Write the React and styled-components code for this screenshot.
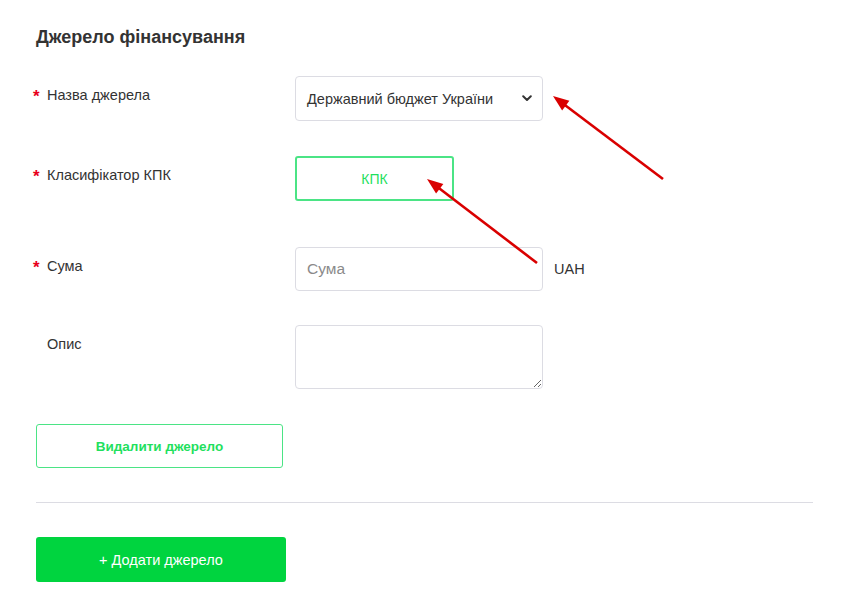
import React from "react";
import styled, { createGlobalStyle } from "styled-components";

const Global = createGlobalStyle`
  html, body { margin: 0; padding: 0; background: #fff; }
  body { font-family: "Liberation Sans", Arial, sans-serif; color: #333; }
  * { box-sizing: border-box; }
`;

const Page = styled.div`
  position: relative;
  width: 844px;
  height: 599px;
  padding: 26px 32px 0 36px;
  overflow: hidden;
`;

const Title = styled.h2`
  margin: 0 0 28px 0;
  font-size: 18px;
  line-height: 22px;
  font-weight: 700;
  color: #333;
`;

const Row = styled.div`
  display: grid;
  grid-template-columns: 259px auto;
  align-items: start;
  margin-bottom: ${(p) => p.$gap}px;
`;

const Label = styled.div`
  display: flex;
  align-items: center;
  margin-left: -3px;
  padding-top: 3px;
  height: 34px;
  font-size: 14.5px;
  color: #333;
`;

const Star = styled.span`
  color: #e8001c;
  font-size: 17px;
  font-weight: 700;
  width: 14px;
  display: inline-block;
  position: relative;
  top: 2px;
  visibility: ${(p) => (p.$hidden ? "hidden" : "visible")};
`;

const FieldWrap = styled.div`
  display: flex;
  align-items: center;
  gap: 11px;
`;

const SelectBox = styled.div`
  width: 248px;
  height: 45px;
  border: 1px solid #dcdce3;
  border-radius: 4px;
  display: flex;
  align-items: center;
  justify-content: space-between;
  padding: 0 10px 0 11px;
  font-size: 14.5px;
  color: #333;
  background: #fff;
`;

const OutlineButton = styled.button`
  width: ${(p) => p.$w}px;
  height: ${(p) => p.$h}px;
  background: #fff;
  border: ${(p) => p.$bw}px solid #4be485;
  border-radius: 3px;
  color: #1fe05e;
  font-family: "Liberation Sans", Arial, sans-serif;
  font-size: ${(p) => (p.$bold ? 13.5 : 14)}px;
  font-weight: ${(p) => (p.$bold ? 700 : 400)};
  cursor: pointer;
  padding: 0;
`;

const Input = styled.input`
  width: 248px;
  height: 44px;
  border: 1px solid #dcdce3;
  border-radius: 4px;
  padding: 0 11px;
  font-family: "Liberation Sans", Arial, sans-serif;
  font-size: 15.5px;
  color: #333;
  outline: none;
  &::placeholder { color: #8a8a8a; }
`;

const Unit = styled.span`
  font-size: 14.5px;
  color: #333;
`;

const TextArea = styled.textarea`
  width: 248px;
  height: 64px;
  border: 1px solid #dcdce3;
  border-radius: 4px;
  padding: 8px 11px;
  font-family: "Liberation Sans", Arial, sans-serif;
  font-size: 14px;
  resize: vertical;
  outline: none;
  display: block;
`;

const Divider = styled.hr`
  margin: 34px 0 34px 0;
  border: none;
  border-top: 1px solid #dcdce3;
  width: 777px;
`;

const PrimaryButton = styled.button`
  width: 250px;
  height: 45px;
  background: #00d43f;
  border: none;
  border-radius: 3px;
  color: #fff;
  font-family: "Liberation Sans", Arial, sans-serif;
  font-size: 14.5px;
  cursor: pointer;
  display: block;
`;

const Overlay = styled.svg`
  position: absolute;
  left: 0;
  top: 0;
  pointer-events: none;
`;

function Arrow({ x1, y1, x2, y2 }) {
  const dx = x2 - x1;
  const dy = y2 - y1;
  const len = Math.hypot(dx, dy);
  const ux = dx / len;
  const uy = dy / len;
  const hl = 16;
  const hw = 6;
  const bx = x2 - ux * hl;
  const by = y2 - uy * hl;
  const p1 = `${bx - uy * hw},${by + ux * hw}`;
  const p2 = `${bx + uy * hw},${by - ux * hw}`;
  return (
    <g>
      <line x1={x1} y1={y1} x2={bx + ux * 2} y2={by + uy * 2} stroke="#d90000" strokeWidth="2.6" />
      <polygon points={`${x2},${y2} ${p1} ${p2}`} fill="#d90000" />
    </g>
  );
}

function Chevron() {
  return (
    <svg width="10" height="7" viewBox="0 0 10 7">
      <path d="M1.2 1.3 L5 5 L8.8 1.3" fill="none" stroke="#333" strokeWidth="2" strokeLinecap="round" strokeLinejoin="round" />
    </svg>
  );
}

export default function App() {
  return (
    <Page>
      <Global />
      <Title>Джерело фінансування</Title>

      <Row $gap={35}>
        <Label><Star>*</Star>Назва джерела</Label>
        <FieldWrap>
          <SelectBox>
            <span>Державний бюджет України</span>
            <Chevron />
          </SelectBox>
        </FieldWrap>
      </Row>

      <Row $gap={46}>
        <Label><Star>*</Star>Класифікатор КПК</Label>
        <FieldWrap>
          <OutlineButton $w={159} $h={45} $bw={2}>КПК</OutlineButton>
        </FieldWrap>
      </Row>

      <Row $gap={34}>
        <Label><Star>*</Star>Сума</Label>
        <FieldWrap>
          <Input placeholder="Сума" />
          <Unit>UAH</Unit>
        </FieldWrap>
      </Row>

      <Row $gap={35}>
        <Label><Star $hidden>*</Star>Опис</Label>
        <FieldWrap>
          <TextArea />
        </FieldWrap>
      </Row>

      <OutlineButton $w={247} $h={44} $bw={1} $bold>Видалити джерело</OutlineButton>

      <Divider />

      <PrimaryButton>+ Додати джерело</PrimaryButton>

      <Overlay width="844" height="599">
        <Arrow x1={663} y1={179} x2={553} y2={96} />
        <Arrow x1={537} y1={263} x2={427} y2={179} />
      </Overlay>
    </Page>
  );
}
